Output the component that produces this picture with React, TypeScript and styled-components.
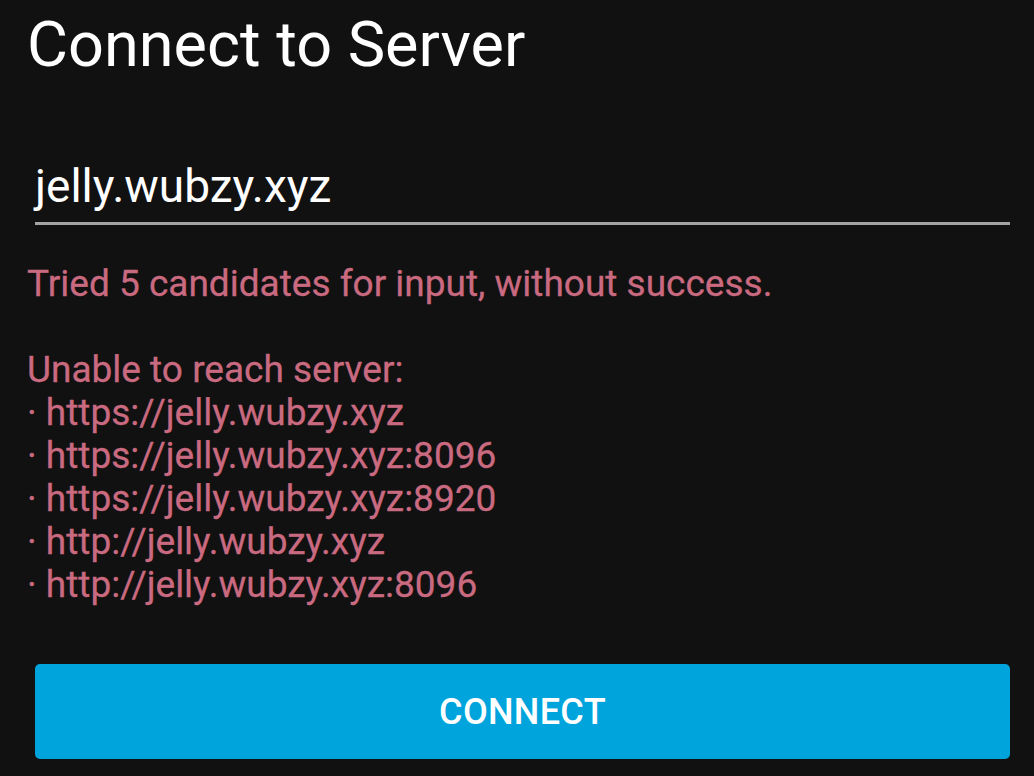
import React from "react";
import styled, { createGlobalStyle } from "styled-components";

const GlobalStyle = createGlobalStyle`
  html, body {
    margin: 0;
    padding: 0;
    background: #111111;
  }
  body {
    font-family: Roboto, "Noto Sans", sans-serif;
    color: #ffffff;
  }
`;

const Page = styled.div`
  width: 1034px;
  height: 776px;
  box-sizing: border-box;
  display: flex;
  flex-direction: column;
  padding: 0 24px 0 27px;
  overflow: hidden;
`;

const Title = styled.h1`
  margin: 14px 0 0;
  font-size: 63px;
  font-weight: 400;
  line-height: 62px;
  color: #ffffff;
`;

const Field = styled.div`
  margin: 85px 0 0 8px;
  border-bottom: 3px solid #a4a4a4;
  padding-bottom: 11px;
`;

const FieldValue = styled.div`
  font-size: 46px;
  line-height: 50px;
  color: #ffffff;
`;

const ErrorText = styled.div`
  margin-top: 37px;
  font-size: 37px;
  line-height: 43px;
  color: #c96a80;
  white-space: pre-line;
  -webkit-text-stroke: 0.3px #c96a80;
`;

const ConnectButton = styled.button`
  margin: auto 0 17px 8px;
  height: 95px;
  border: none;
  border-radius: 5px;
  background: #00a4dc;
  color: #ffffff;
  font-family: Roboto, "Noto Sans", sans-serif;
  font-size: 36px;
  font-weight: 500;
  letter-spacing: 0.3px;
  text-transform: uppercase;
`;

const candidates = [
  "https://jelly.wubzy.xyz",
  "https://jelly.wubzy.xyz:8096",
  "https://jelly.wubzy.xyz:8920",
  "http://jelly.wubzy.xyz",
  "http://jelly.wubzy.xyz:8096",
];

const App = () => {
  const message =
    `Tried ${candidates.length} candidates for input, without success.\n\nUnable to reach server:\n` +
    candidates.map((c) => `· ${c}`).join("\n");

  return (
    <>
      <GlobalStyle />
      <Page>
        <Title>Connect to Server</Title>
        <Field>
          <FieldValue>jelly.wubzy.xyz</FieldValue>
        </Field>
        <ErrorText>{message}</ErrorText>
        <ConnectButton>Connect</ConnectButton>
      </Page>
    </>
  );
};

export default App;
